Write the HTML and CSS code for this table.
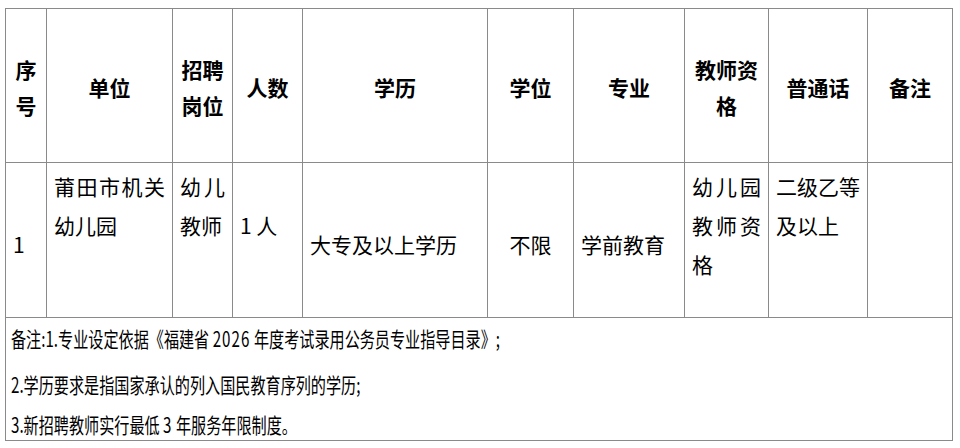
FILE: index.html
```html
<!DOCTYPE html>
<html lang="zh-CN">
<head>
<meta charset="utf-8">
<title>招聘岗位表</title>
<link rel="stylesheet" href="styles.css">
</head>
<body>
<table class="grid">
  <colgroup>
    <col class="c-no"><col class="c-unit"><col class="c-post"><col class="c-num"><col class="c-edu">
    <col class="c-deg"><col class="c-major"><col class="c-cert"><col class="c-lang"><col class="c-memo">
  </colgroup>
  <tr class="head">
    <th>序<br>号</th>
    <th>单位</th>
    <th>招聘<br>岗位</th>
    <th>人数</th>
    <th>学历</th>
    <th>学位</th>
    <th>专业</th>
    <th>教师资<br>格</th>
    <th>普通话</th>
    <th>备注</th>
  </tr>
  <tr class="data">
    <td class="mid left">1</td>
    <td class="top just">莆田市机关幼儿园</td>
    <td class="top just">幼儿教师</td>
    <td class="top second">1 人</td>
    <td class="mid left">大专及以上学历</td>
    <td class="mid center">不限</td>
    <td class="mid left">学前教育</td>
    <td class="top just">幼儿园教师资格</td>
    <td class="top just">二级乙等及以上</td>
    <td></td>
  </tr>
  <tr class="note">
    <td colspan="10">
      <div class="note-box">
        <div class="note-line first"><span class="squeeze">备注:1.专业设定依据《福建省 <span class="num">2026</span> 年度考试录用公务员专业指导目录》;</span></div>
        <div class="note-line"><span class="squeeze">2.学历要求是指国家承认的列入国民教育序列的学历;</span></div>
        <div class="note-line"><span class="squeeze">3.新招聘教师实行最低 <span class="num">3</span> 年服务年限制度。</span></div>
      </div>
    </td>
  </tr>
</table>
</body>
</html>
```

FILE: styles.css
```css
html, body {
  margin: 0;
  padding: 0;
  background: #ffffff;
}

body {
  padding: 8px 0 0 5px;
  font-family: "Noto Sans CJK SC", "Liberation Sans", sans-serif;
  color: #000000;
  font-size: 21px;
}

.grid {
  border-collapse: collapse;
  table-layout: fixed;
  width: 947px;
  border: 1px solid #999999;
}

.c-no { width: 41px; }
.c-unit { width: 126px; }
.c-post { width: 60px; }
.c-num { width: 70px; }
.c-edu { width: 185px; }
.c-deg { width: 86px; }
.c-major { width: 111px; }
.c-cert { width: 84px; }
.c-lang { width: 99px; }
.c-memo { width: 85px; }

.grid th,
.grid td {
  border: 1px solid #8a8a8a;
  padding: 0 7px;
  overflow: visible;
}

.head th {
  height: 154px;
  font-weight: bold;
  line-height: 36px;
  text-align: center;
  vertical-align: middle;
  padding: 2px 0 0 0;
  box-sizing: border-box;
}

.data td {
  height: 155px;
  line-height: 39px;
  box-sizing: border-box;
}

.top {
  vertical-align: top;
  padding-top: 4px !important;
}

.second {
  padding-top: 43px !important;
}

.mid {
  vertical-align: middle;
  padding-top: 8px !important;
}

.left { text-align: left; }
.center { text-align: center; }

.just {
  text-align: justify;
  text-align-last: left;
}

.note td {
  height: 123px;
  padding: 0 5px;
  vertical-align: top;
  box-sizing: border-box;
}

.note-box {
  height: 122px;
  overflow: visible;
}

.note-line {
  line-height: 40px;
  white-space: nowrap;
}

.note-line.first {
  margin-bottom: 6px;
}

.squeeze {
  display: inline-block;
  transform: scaleX(0.72);
  transform-origin: left center;
}

.num {
  letter-spacing: 1.5px;
}
```
